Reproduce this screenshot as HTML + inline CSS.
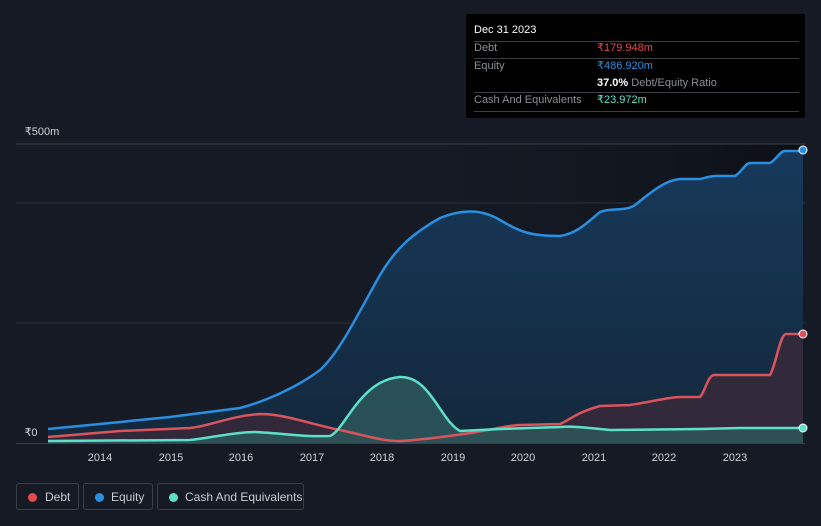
<!DOCTYPE html>
<html><head><meta charset="utf-8"><style>
body{margin:0;width:821px;height:526px;background:#151a24;font-family:"Liberation Sans",sans-serif;overflow:hidden;position:relative}
.tt{position:absolute;left:466px;top:14px;width:339px;height:104px;background:#000;border-radius:2px;font-size:11px;color:#8a8e95}
.tt .l{position:absolute;left:8px;right:6px;height:1px;background:#3a3d42}
.tt .t{position:absolute;left:8px;line-height:13px}
.tt .v{position:absolute;left:131px;line-height:13px}
.leg{position:absolute;top:483px;height:27px;border:1px solid #3a3f4a;border-radius:3px;color:#c9ccd1;font-size:12px;line-height:27px;box-sizing:border-box}
.leg i{position:absolute;left:11px;top:9px;width:9px;height:9px;border-radius:50%}
</style></head><body>
<svg width="821" height="526" style="position:absolute;left:0;top:0">
<defs>
<linearGradient id="bg" x1="0" x2="1" y1="0" y2="0"><stop offset="0" stop-color="#151a24" stop-opacity="0"/><stop offset="1" stop-color="#0c0f15"/></linearGradient>
<linearGradient id="eq" x1="0" x2="0" y1="0" y2="1"><stop offset="0" stop-color="#17395a"/><stop offset="1" stop-color="#13283c"/></linearGradient>
</defs>
<rect x="380" y="144" width="423" height="300" fill="url(#bg)"/>
<line x1="16" y1="144" x2="805" y2="144" stroke="#3c4049"/>
<line x1="16" y1="203" x2="805" y2="203" stroke="#2b303a"/>
<line x1="16" y1="323" x2="805" y2="323" stroke="#2b303a"/>
<path d="M48,429 L100,424 170,417 240,408 C270,400 300,385 320,370 C340,352 360,310 380,275 C395,250 410,235 440,218 C460,210 480,208 500,220 C520,232 530,236 560,236 C575,234 585,225 600,212 C612,207 625,212 635,205 C650,193 665,180 680,179 L700,179 C705,178 710,176 715,176 L735,176 C742,172 745,163 750,163 L770,163 C776,160 780,151 785,151 L803,151 L803,443 L48,443 Z" fill="url(#eq)"/>
<path d="M48,437 L120,431 190,428 C210,426 230,416 260,414 C285,414 310,424 340,430 C360,434 380,441 400,441 C420,440 450,436 470,433 C490,430 510,425 520,425 L560,424 C570,420 575,413 600,406 L630,405 C650,402 670,397 680,397 L700,397 C705,392 708,375 714,375 L740,375 L770,375 C776,365 780,334 786,334 L803,334 L803,443 L48,443 Z" fill="#35293a" opacity=".9"/>
<path d="M48,441 L190,440 C210,438 235,432 255,432 C280,433 300,437 330,436 C345,430 360,380 400,377 C430,376 440,420 460,431 L500,429 L560,427 C570,426 580,427 610,430 L700,429 L740,428 L803,428 L803,443 L48,443 Z" fill="#2e5a5c" opacity=".8"/>
<path d="M48,429 L100,424 170,417 240,408 C270,400 300,385 320,370 C340,352 360,310 380,275 C395,250 410,235 440,218 C460,210 480,208 500,220 C520,232 530,236 560,236 C575,234 585,225 600,212 C612,207 625,212 635,205 C650,193 665,180 680,179 L700,179 C705,178 710,176 715,176 L735,176 C742,172 745,163 750,163 L770,163 C776,160 780,151 785,151 L803,151" fill="none" stroke="#2a8fe0" stroke-width="2.5"/>
<path d="M48,437 L120,431 190,428 C210,426 230,416 260,414 C285,414 310,424 340,430 C360,434 380,441 400,441 C420,440 450,436 470,433 C490,430 510,425 520,425 L560,424 C570,420 575,413 600,406 L630,405 C650,402 670,397 680,397 L700,397 C705,392 708,375 714,375 L740,375 L770,375 C776,365 780,334 786,334 L803,334" fill="none" stroke="#d9545d" stroke-width="2.5"/>
<path d="M48,441 L190,440 C210,438 235,432 255,432 C280,433 300,437 330,436 C345,430 360,380 400,377 C430,376 440,420 460,431 L500,429 L560,427 C570,426 580,427 610,430 L700,429 L740,428 L803,428" fill="none" stroke="#5ee0c8" stroke-width="2.5"/>
<line x1="16" y1="443.5" x2="805" y2="443.5" stroke="#3c4049"/>
<circle cx="803" cy="150" r="4" fill="#2a8fe0" stroke="#fff" stroke-width="1"/>
<circle cx="803" cy="334" r="4" fill="#d9545d" stroke="#fff" stroke-width="1"/>
<circle cx="803" cy="428" r="4" fill="#5ee0c8" stroke="#fff" stroke-width="1"/>
<g fill="#d0d3d8" font-size="11" text-anchor="middle" font-family="Liberation Sans">
<text x="100" y="461">2014</text><text x="171" y="461">2015</text><text x="241" y="461">2016</text><text x="312" y="461">2017</text><text x="382" y="461">2018</text><text x="453" y="461">2019</text><text x="523" y="461">2020</text><text x="594" y="461">2021</text><text x="664" y="461">2022</text><text x="735" y="461">2023</text>
<text x="42" y="135" text-anchor="middle">₹500m</text><text x="31" y="436">₹0</text>
</g>
</svg>
<div class="tt">
<div class="t" style="top:10px;color:#fff">Dec 31 2023</div>
<div class="l" style="top:27px"></div>
<div class="t" style="top:28px">Debt</div><div class="v" style="top:28px;color:#e5484d">₹179.948m</div>
<div class="l" style="top:44px"></div>
<div class="t" style="top:46px">Equity</div><div class="v" style="top:46px;color:#2a8fe0">₹486.920m</div>
<div class="v" style="top:63px;color:#fff"><b>37.0%</b> <span style="color:#8a8e95">Debt/Equity Ratio</span></div>
<div class="l" style="top:78px"></div>
<div class="t" style="top:80px">Cash And Equivalents</div><div class="v" style="top:80px;color:#5ee0c8">₹23.972m</div>
<div class="l" style="top:97px"></div>
</div>
<div class="leg" style="left:16px;width:63px"><i style="background:#e5484d"></i><span style="position:absolute;left:28px">Debt</span></div>
<div class="leg" style="left:83px;width:70px"><i style="background:#2a8fe0"></i><span style="position:absolute;left:27px">Equity</span></div>
<div class="leg" style="left:157px;width:147px"><i style="background:#5ee0c8"></i><span style="position:absolute;left:27px">Cash And Equivalents</span></div>
</body></html>
